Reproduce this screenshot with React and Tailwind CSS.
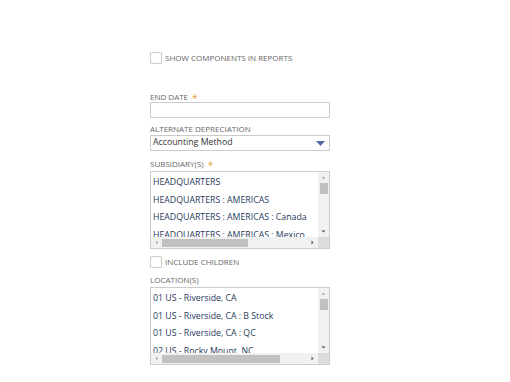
const font = { fontFamily: '"Open Sans", "Liberation Sans", sans-serif' };

function Checkbox({ label }) {
  return (
    <div className="flex items-center h-[12px]">
      <div className="w-[12px] h-[12px] border border-[#cccccc] bg-white rounded-[1px]" />
      <span className="ml-[3px] text-[8px] text-[#666666] uppercase leading-none">{label}</span>
    </div>
  );
}

function Label({ text, required }) {
  return (
    <div className="text-[8px] text-[#666666] uppercase leading-none h-[9px] flex items-center">
      {text}
      {required && <span className="ml-[4px] text-[#e8a33d] text-[10px] leading-none mt-[2px]">*</span>}
    </div>
  );
}

function ListBox({ items, thumb }) {
  return (
    <div className="w-[180px] h-[78px] border border-[#cccccc] bg-white flex flex-col">
      <div className="flex flex-1 min-h-0">
        <div className="flex-1 overflow-hidden pl-[2px] pt-[2px]">
          {items.map((it) => (
            <div key={it} className="h-[17.6px] flex items-center text-[8.75px] text-[#27395a] whitespace-nowrap">
              {it}
            </div>
          ))}
        </div>
        <div className="w-[11px] bg-[#f1f1f1] flex flex-col items-center">
          <svg width="11" height="11" viewBox="0 0 11 11"><path d="M3.5 6.5 L5.5 4.5 L7.5 6.5 Z" fill="#a3a3a3" /></svg>
          <div className="w-[8px] h-[11px] bg-[#c1c1c1]" />
          <div className="flex-1" />
          <svg width="11" height="11" viewBox="0 0 11 11"><path d="M3.5 4.5 L5.5 6.5 L7.5 4.5 Z" fill="#505050" /></svg>
        </div>
      </div>
      <div className="h-[11px] flex bg-[#f1f1f1]">
        <div className="flex-1 flex items-center">
          <svg width="11" height="11" viewBox="0 0 11 11"><path d="M6.5 3.5 L4.5 5.5 L6.5 7.5 Z" fill="#a3a3a3" /></svg>
          <div className="h-[8px] bg-[#c1c1c1]" style={{ width: thumb }} />
          <div className="flex-1" />
          <svg width="11" height="11" viewBox="0 0 11 11"><path d="M4.5 3.5 L6.5 5.5 L4.5 7.5 Z" fill="#505050" /></svg>
        </div>
        <div className="w-[11px] bg-[#dcdcdc]" />
      </div>
    </div>
  );
}

export default function App() {
  return (
    <div className="w-[510px] h-[382px] bg-white pl-[150px] pt-[52px]" style={font}>
      <Checkbox label="Show Components in Reports" />

      <div className="mt-[28px]">
        <Label text="End Date" required />
      </div>
      <div className="mt-[1px] w-[180px] h-[16px] border border-[#cccccc] bg-white" />

      <div className="mt-[6px]">
        <Label text="Alternate Depreciation" />
      </div>
      <div className="mt-[2px] w-[180px] h-[16px] border border-[#cccccc] bg-white flex items-center justify-between pl-[2px] pr-[4px]">
        <span className="text-[8.75px] text-[#333333]">Accounting Method</span>
        <svg width="9" height="5" viewBox="0 0 9 5"><path d="M0 0 L9 0 L4.5 5 Z" fill="#4a6aa0" /></svg>
      </div>

      <div className="mt-[8px]">
        <Label text="Subsidiary(s)" required />
      </div>
      <div className="mt-[3px]">
        <ListBox
          thumb={86}
          items={[
            'HEADQUARTERS',
            'HEADQUARTERS : AMERICAS',
            'HEADQUARTERS : AMERICAS : Canada',
            'HEADQUARTERS : AMERICAS : Mexico',
          ]}
        />
      </div>

      <div className="mt-[7px]">
        <Checkbox label="Include Children" />
      </div>

      <div className="mt-[7px]">
        <Label text="Location(s)" />
      </div>
      <div className="mt-[3px]">
        <ListBox
          thumb={118}
          items={[
            '01 US - Riverside, CA',
            '01 US - Riverside, CA : B Stock',
            '01 US - Riverside, CA : QC',
            '02 US - Rocky Mount, NC',
          ]}
        />
      </div>
    </div>
  );
}
